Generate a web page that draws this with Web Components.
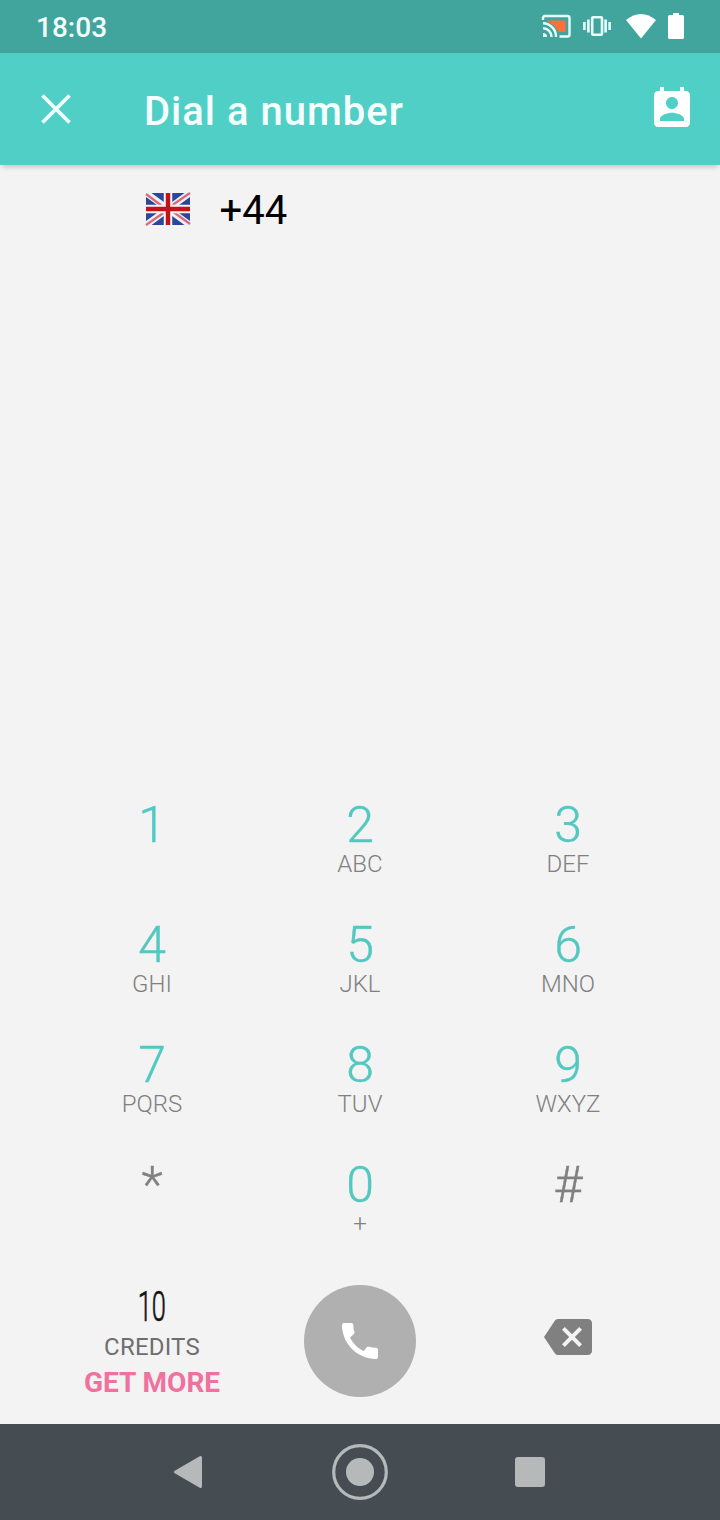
<!DOCTYPE html>
<html lang="en">
<head>
<meta charset="utf-8">
<title>Dial a number</title>
<style>
  body {
    margin: 0;
    background: #f3f3f3;
    font-family: Roboto, "Liberation Sans", sans-serif;
  }
</style>
</head>
<body>
<dialer-screen></dialer-screen>

<script>
class StatusBar extends HTMLElement {
  constructor() {
    super();
    this.attachShadow({ mode: 'open' });
  }

  connectedCallback() {
    this.shadowRoot.innerHTML = `
      <style>
        :host {
          display: flex;
          align-items: center;
          justify-content: space-between;
          box-sizing: border-box;
          height: 53px;
          padding: 0 35px 0 36px;
          background: #41a49d;
          color: #f2fffd;
        }
        .time {
          font-size: 28px;
          font-weight: 500;
          line-height: 32px;
          padding-top: 2px;
        }
        .icons {
          display: flex;
          align-items: center;
          padding-bottom: 1px;
        }
        svg { display: block; }
        .cast { margin-right: 12px; }
        .vibrate { margin-right: 15px; }
        .wifi { margin-right: 11px; }
      </style>
      <span class="time">${this.getAttribute('time') || ''}</span>
      <div class="icons">
        <svg class="cast" width="30" height="26" viewBox="0 0 30 26">
          <path d="M7 7.5H24.5V19H17C15.5 14 12 10.5 7 9.5Z" fill="#ff6f3c"/>
          <path d="M2 7V5Q2 3 4 3H26.5Q28.5 3 28.5 5V21.5Q28.5 23.5 26.5 23.5H18.5" fill="none" stroke="#e6fffc" stroke-width="2.4"/>
          <path d="M2 10.2A13.5 13.5 0 0 1 15 24M2 15.2A8.8 8.8 0 0 1 10.6 24" fill="none" stroke="#e6fffc" stroke-width="2.4"/>
          <path d="M2 20A4 4 0 0 1 6 24H2Z" fill="#e6fffc"/>
        </svg>
        <svg class="vibrate" width="28" height="26" viewBox="0 0 28 26" fill="none" stroke="#e6fffc" stroke-width="2.6">
          <rect x="9.2" y="4.2" width="9.8" height="17.6" rx="1"/>
          <path d="M1.4 9V17M5.4 6.5V19.5M22.6 6.5V19.5M26.6 9V17"/>
        </svg>
        <svg class="wifi" width="30" height="26" viewBox="0 0 30 26">
          <path d="M15 25.5L0 7Q15-5 30 7Z" fill="#fff"/>
        </svg>
        <svg width="18" height="26" viewBox="0 0 18 26">
          <path d="M6 0H12V2H15.5Q17 2 17 3.5V24.5Q17 26 15.5 26H2.5Q1 26 1 24.5V3.5Q1 2 2.5 2H6Z" fill="#fff"/>
        </svg>
      </div>
    `;
  }
}

class AppBar extends HTMLElement {
  constructor() {
    super();
    this.attachShadow({ mode: 'open' });
  }

  connectedCallback() {
    this.shadowRoot.innerHTML = `
      <style>
        :host {
          display: flex;
          align-items: center;
          box-sizing: border-box;
          height: 112px;
          padding: 0 24px 0 32px;
          background: #4fcfc5;
          box-shadow: 0 4px 5px -2px rgba(0, 0, 0, 0.2);
          color: #f4fffe;
        }
        h1 {
          flex: 1;
          margin: 0 0 0 64px;
          padding-top: 6px;
          font-size: 40px;
          font-weight: 500;
          line-height: 48px;
          letter-spacing: 1px;
        }
        svg { display: block; }
      </style>
      <svg width="48" height="48" viewBox="0 0 48 48">
        <path d="M10.5 10.5L37.5 37.5M37.5 10.5L10.5 37.5" stroke="#f0fffe" stroke-width="3.8"/>
      </svg>
      <h1><slot></slot></h1>
      <svg width="48" height="48" viewBox="0 0 24 24">
        <path fill="#fff" d="M19 3h-1V1h-2v2H8V1H6v2H5c-1.11 0-2 .9-2 2v14c0 1.1.89 2 2 2h14c1.1 0 2-.9 2-2V5c0-1.1-.9-2-2-2zm-7 3c1.66 0 3 1.34 3 3s-1.34 3-3 3-3-1.34-3-3 1.34-3 3-3zm6 12H6v-1c0-2 4-3.1 6-3.1s6 1.1 6 3.1v1z"/>
      </svg>
    `;
  }
}

class CountryCode extends HTMLElement {
  constructor() {
    super();
    this.attachShadow({ mode: 'open' });
  }

  connectedCallback() {
    this.shadowRoot.innerHTML = `
      <style>
        :host {
          display: flex;
          align-items: center;
          height: 88px;
          padding-left: 145px;
          color: #000;
          font-size: 40px;
          line-height: 48px;
        }
        svg { display: block; }
        span { padding: 4px 0 0 28.5px; }
      </style>
      <svg width="46" height="34" viewBox="0 0 46 34">
        <rect x="1" y="1" width="44" height="32" fill="#2b479b"/>
        <path d="M1 1L45 33M45 1L1 33" stroke="#eef0f6" stroke-width="6.5"/>
        <path d="M1 2L19 15.500M45 1L26 14M27 19L45 32M1 33L19 20.500" stroke="#d96a7c" stroke-width="2.2"/>
        <path d="M23 1V33M1 17H45" stroke="#f6f3f5" stroke-width="8.5"/>
        <path d="M23 1V33M1 17H45" stroke="#c4121c" stroke-width="4.4"/>
      </svg>
      <span><slot></slot></span>
    `;
  }
}

class DialKey extends HTMLElement {
  constructor() {
    super();
    this.attachShadow({ mode: 'open' });
  }

  connectedCallback() {
    this.shadowRoot.innerHTML = `
      <style>
        :host {
          display: flex;
          flex-direction: column;
          align-items: center;
          height: 120px;
          color: #808080;
          font-weight: 300;
        }
        .digit {
          color: var(--digit-color, #52c8c0);
          font-size: 50px;
          line-height: 50px;
          -webkit-text-stroke: 0.4px;
        }
        .letters {
          font-size: 24px;
          line-height: 28px;
        }
      </style>
      <span class="digit"><slot></slot></span>
      <span class="letters">${this.getAttribute('letters') || ''}</span>
    `;
  }
}

class DialPad extends HTMLElement {
  constructor() {
    super();
    this.attachShadow({ mode: 'open' });
  }

  connectedCallback() {
    this.shadowRoot.innerHTML = `
      <style>
        :host {
          display: grid;
          grid-template-columns: repeat(3, 1fr);
          padding: 0 48px;
        }
        .symbol { --digit-color: #808080; }
      </style>
      <dial-key>1</dial-key>
      <dial-key letters="ABC">2</dial-key>
      <dial-key letters="DEF">3</dial-key>
      <dial-key letters="GHI">4</dial-key>
      <dial-key letters="JKL">5</dial-key>
      <dial-key letters="MNO">6</dial-key>
      <dial-key letters="PQRS">7</dial-key>
      <dial-key letters="TUV">8</dial-key>
      <dial-key letters="WXYZ">9</dial-key>
      <dial-key class="symbol">*</dial-key>
      <dial-key letters="+">0</dial-key>
      <dial-key class="symbol">#</dial-key>
    `;
  }
}

class CallActions extends HTMLElement {
  constructor() {
    super();
    this.attachShadow({ mode: 'open' });
  }

  connectedCallback() {
    this.shadowRoot.innerHTML = `
      <style>
        :host {
          display: grid;
          grid-template-columns: repeat(3, 1fr);
          justify-items: center;
          box-sizing: border-box;
          height: 144px;
          padding: 5px 48px 0;
        }
        .credits {
          display: flex;
          flex-direction: column;
          align-items: center;
          white-space: nowrap;
        }
        .count {
          color: #111;
          font-size: 43px;
          font-weight: 300;
          line-height: 43px;
          transform: scaleX(0.59);
          -webkit-text-stroke: 0.7px;
        }
        .label {
          color: #6e6e6e;
          font-size: 24px;
          line-height: 28px;
          letter-spacing: 0.2px;
          margin-top: 5px;
        }
        .more {
          color: #f0709f;
          font-size: 28px;
          font-weight: 700;
          line-height: 36px;
          margin-top: 4px;
        }
        .call {
          display: flex;
          align-items: center;
          justify-content: center;
          width: 112px;
          height: 112px;
          border-radius: 50%;
          background: #b0b0b0;
        }
        .erase { margin-top: 28px; }
        svg { display: block; }
      </style>
      <div class="credits">
        <span class="count">${this.getAttribute('credits') || '0'}</span>
        <span class="label">CREDITS</span>
        <span class="more">GET MORE</span>
      </div>
      <div class="call">
        <svg width="48" height="48" viewBox="0 0 24 24">
          <path fill="#fff" d="M20.01 15.38c-1.23 0-2.42-.2-3.53-.56-.35-.12-.74-.03-1.01.24l-1.57 1.97c-2.83-1.35-5.48-3.9-6.89-6.83l1.95-1.66c.27-.28.35-.67.24-1.02-.37-1.11-.56-2.3-.56-3.53 0-.54-.45-.99-.99-.99H4.19C3.65 3 3 3.24 3 3.99 3 13.28 10.73 21 20.01 21c.71 0 .99-.63.99-1.18v-3.45c0-.54-.45-.99-.99-.99z"/>
        </svg>
      </div>
      <svg class="erase" width="48" height="48" viewBox="0 0 24 24">
        <path fill="#808080" d="M22 3H7c-.69 0-1.23.35-1.59.88L0 12l5.41 8.11c.36.53.9.89 1.59.89h15c1.1 0 2-.9 2-2V5c0-1.1-.9-2-2-2zm-3 12.59L17.59 17 14 13.41 10.41 17 9 15.59 12.59 12 9 8.41 10.41 7 14 10.59 17.59 7 19 8.41 15.41 12 19 15.59z"/>
      </svg>
    `;
  }
}

class NavBar extends HTMLElement {
  constructor() {
    super();
    this.attachShadow({ mode: 'open' });
  }

  connectedCallback() {
    this.shadowRoot.innerHTML = `
      <style>
        :host {
          display: flex;
          align-items: center;
          justify-content: space-between;
          box-sizing: border-box;
          height: 96px;
          padding: 0 162px;
          background: #454d52;
        }
        svg { display: block; }
      </style>
      <svg width="56" height="56" viewBox="0 0 56 56">
        <path d="M13.5 28L38.5 13.5V42.5Z" fill="#b5b9ba" stroke="#b5b9ba" stroke-width="3" stroke-linejoin="round"/>
      </svg>
      <svg width="56" height="56" viewBox="0 0 56 56">
        <circle cx="28" cy="28" r="26.3" fill="none" stroke="#b5b9ba" stroke-width="3.2"/>
        <circle cx="28" cy="28" r="14" fill="#b5b9ba"/>
      </svg>
      <svg width="56" height="56" viewBox="0 0 56 56">
        <rect x="13" y="13" width="30" height="30" rx="3" fill="#b5b9ba"/>
      </svg>
    `;
  }
}

class DialerScreen extends HTMLElement {
  constructor() {
    super();
    this.attachShadow({ mode: 'open' });
  }

  connectedCallback() {
    this.shadowRoot.innerHTML = `
      <style>
        :host {
          display: flex;
          flex-direction: column;
          width: 720px;
          height: 1520px;
          overflow: hidden;
        }
        dial-pad { margin-top: auto; }
      </style>
      <status-bar time="18:03"></status-bar>
      <app-bar>Dial a number</app-bar>
      <country-code>+44</country-code>
      <dial-pad></dial-pad>
      <call-actions credits="10"></call-actions>
      <nav-bar></nav-bar>
    `;
  }
}

customElements.define('status-bar', StatusBar);
customElements.define('app-bar', AppBar);
customElements.define('country-code', CountryCode);
customElements.define('dial-key', DialKey);
customElements.define('dial-pad', DialPad);
customElements.define('call-actions', CallActions);
customElements.define('nav-bar', NavBar);
customElements.define('dialer-screen', DialerScreen);
</script>
</body>
</html>
